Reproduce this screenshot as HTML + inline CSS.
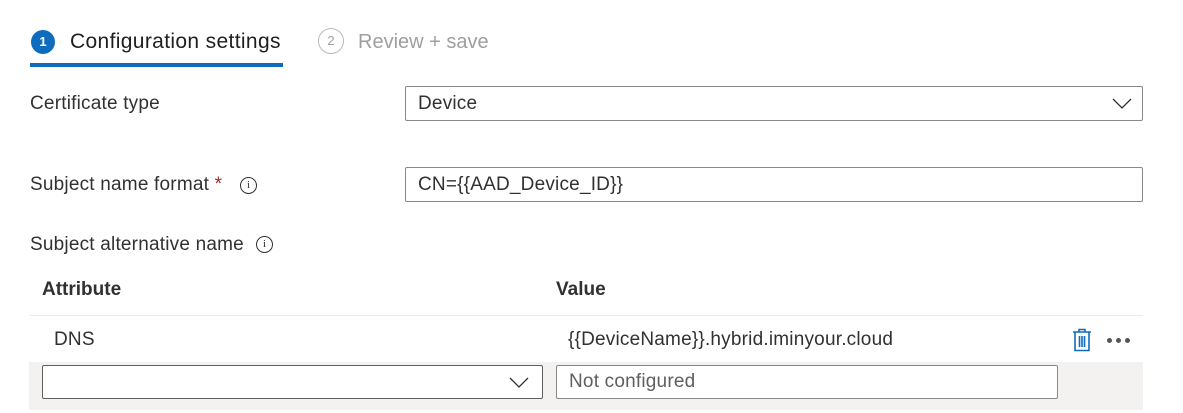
<!DOCTYPE html>
<html><head><style>
body{margin:0;width:1183px;height:413px;background:#fff;font-family:"Liberation Sans",sans-serif;color:#323130;position:relative;overflow:hidden}
.a{position:absolute}
.lbl{font-size:19px;letter-spacing:0.2px;color:#323130}
.box{position:absolute;border:1px solid #8a8886;border-radius:2px;box-sizing:border-box;background:#fff;font-size:19px;letter-spacing:0.2px;padding-left:12px;display:flex;align-items:center}
.info{position:absolute;width:17px;height:17px;border:1.3px solid #323130;border-radius:50%;box-sizing:border-box;font-size:11px;text-align:center;line-height:15px;font-family:"Liberation Serif",serif}
</style></head><body>
<div class="a" style="left:31px;top:30px;width:24px;height:24px;border-radius:50%;background:#0f6cbd;color:#fff;font-size:13px;font-weight:bold;text-align:center;line-height:24px">1</div>
<div class="a" style="left:70px;top:30px;font-size:21px;letter-spacing:0.35px;color:#201f1e">Configuration settings</div>
<div class="a" style="left:30px;top:63px;width:253px;height:4px;background:#0f6cbd"></div>
<div class="a" style="left:318px;top:28px;width:26px;height:26px;border-radius:50%;border:1.5px solid #bbb;box-sizing:border-box;color:#a0a0a0;font-size:13px;text-align:center;line-height:23px">2</div>
<div class="a" style="left:358px;top:31px;font-size:20px;color:#a19f9d">Review + save</div>

<div class="a lbl" style="left:30px;top:93px">Certificate type</div>
<div class="box" style="left:405px;top:86px;width:738px;height:35px">Device
<svg class="a" style="right:10px;top:10px" width="20" height="13"><path d="M1 2 L10 11 L19 2" fill="none" stroke="#323130" stroke-width="1.3"/></svg></div>

<div class="a lbl" style="left:30px;top:174px">Subject name format <span style="color:#a4262c">*</span></div>
<div class="info" style="left:240px;top:177px">i</div>
<div class="box" style="left:405px;top:167px;width:738px;height:35px">CN={{AAD_Device_ID}}</div>

<div class="a lbl" style="left:30px;top:234px">Subject alternative name</div>
<div class="info" style="left:256px;top:236px">i</div>

<div class="a" style="left:42px;top:279px;font-size:19px;font-weight:bold">Attribute</div>
<div class="a" style="left:556px;top:279px;font-size:19px;font-weight:bold">Value</div>
<div class="a" style="left:30px;top:315px;width:1113px;height:1px;background:#edebe9"></div>
<div class="a lbl" style="left:54px;top:329px">DNS</div>
<div class="a lbl" style="left:568px;top:329px">{{DeviceName}}.hybrid.iminyour.cloud</div>
<svg class="a" style="left:1072px;top:328px" width="20" height="24"><path d="M1 4h18M7 4V1.5h6V4M3 4v18.5h14V4" fill="none" stroke="#0f6cbd" stroke-width="1.6"/><path d="M7.5 8v11M10 8v11M12.5 8v11" stroke="#0f6cbd" stroke-width="1.6"/></svg>
<div class="a" style="left:1107px;top:338px;width:5px;height:5px;border-radius:50%;background:#555"></div>
<div class="a" style="left:1116px;top:338px;width:5px;height:5px;border-radius:50%;background:#555"></div>
<div class="a" style="left:1125px;top:338px;width:5px;height:5px;border-radius:50%;background:#555"></div>

<div class="a" style="left:29px;top:362px;width:1114px;height:48px;background:#f3f2f1"></div>
<div class="box" style="left:42px;top:365px;width:501px;height:34px;border-color:#605e5c">
<svg class="a" style="right:13px;top:10px" width="20" height="13"><path d="M1 2 L10 11 L19 2" fill="none" stroke="#323130" stroke-width="1.3"/></svg></div>
<div class="box" style="left:556px;top:365px;width:502px;height:34px;color:#605e5c">Not configured</div>
</body></html>
